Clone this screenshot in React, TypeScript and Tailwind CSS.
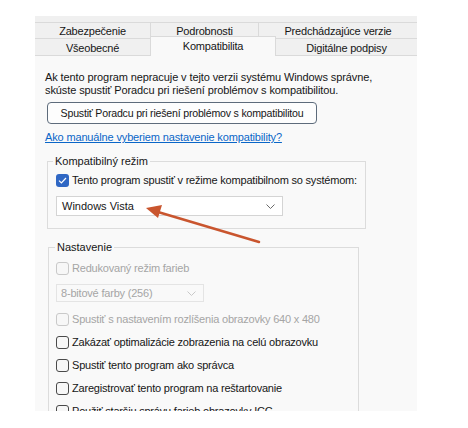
import React from "react";

const font = { fontFamily: '"Liberation Sans", Arial, sans-serif' };

function Chevron({ disabled }: { disabled?: boolean }) {
  return (
    <svg width="9" height="5" viewBox="0 0 9 5" className="shrink-0">
      <path
        d="M0.5 0.5 L4.5 4.5 L8.5 0.5"
        fill="none"
        stroke={disabled ? "#c8c8c8" : "#6a6a6a"}
        strokeWidth="1"
      />
    </svg>
  );
}

function Box({ checked, disabled }: { checked?: boolean; disabled?: boolean }) {
  if (checked) {
    return (
      <span className="flex h-[13px] w-[13px] shrink-0 items-center justify-center rounded-[3px] bg-[#2f67c4]">
        <svg width="9" height="7" viewBox="0 0 9 7">
          <path d="M1 3.6 L3.4 6 L8 1" fill="none" stroke="#ffffff" strokeWidth="1.2" />
        </svg>
      </span>
    );
  }
  return (
    <span
      className={
        disabled
          ? "h-[13px] w-[13px] shrink-0 rounded-[3px] border border-[#c9c9c9] bg-[#f7f7f7]"
          : "h-[13px] w-[13px] shrink-0 rounded-[3px] border border-[#4a4a4a] bg-[#f7f7f7]"
      }
    />
  );
}

function Check({
  label,
  checked,
  disabled,
  tall,
}: {
  label: string;
  checked?: boolean;
  disabled?: boolean;
  tall?: boolean;
}) {
  return (
    <div
      className={
        tall
          ? "flex h-[23px] items-center gap-[3px] whitespace-nowrap tracking-[-0.2px]"
          : "flex h-[22px] items-center gap-[3px] whitespace-nowrap tracking-[-0.2px]"
      }
    >
      <Box checked={checked} disabled={disabled} />
      <span className={disabled ? "text-[#a5a5a5]" : "text-[#161616]"}>{label}</span>
    </div>
  );
}

export default function App() {
  return (
    <div className="relative h-[428px] w-[468px] bg-white text-[11px] leading-[13px]" style={font}>
      <div className="ml-[35px] pt-[16px]">
        <div className="flex h-[395px] w-[382px] flex-col overflow-hidden bg-[#f0f0f0] pt-[6px] text-[#161616]">
          {/* tabs */}
          <div className="flex h-[18px] border-t border-[#dadada] tracking-[-0.2px]">
            <div className="flex w-[116px] items-center justify-center border-r border-[#dadada] pt-[2px]">Zabezpečenie</div>
            <div className="flex w-[108px] items-center justify-center border-r border-[#dadada] pt-[2px]">Podrobnosti</div>
            <div className="flex flex-1 items-center justify-center pt-[2px]">Predchádzajúce verzie</div>
          </div>
          <div className="flex h-[18px] border-t border-b border-[#dadada] tracking-[-0.2px]">
            <div className="flex w-[115px] items-center justify-center pt-[2px]">Všeobecné</div>
            <div className="-mt-[3px] -mb-px flex h-[21px] w-[126px] items-center justify-center border-x border-t border-[#dadada] bg-[#f9f9f9] pb-[2px]">
              Kompatibilita
            </div>
            <div className="flex flex-1 items-center justify-center pt-[2px]">Digitálne podpisy</div>
          </div>

          {/* content */}
          <div className="flex flex-1 flex-col whitespace-nowrap bg-[#f9f9f9] px-[10px] pt-[15px]">
            <p className="tracking-[-0.1px]">
              Ak tento program nepracuje v tejto verzii systému Windows správne,
              <br />
              skúste spustiť Poradcu pri riešení problémov s kompatibilitou.
            </p>
            <button className="ml-[2px] mt-[5px] flex h-[22px] w-[270px] items-center justify-center rounded-[4px] border border-[#5d6b7b] bg-[#fdfdfd] text-[10.6px] tracking-[-0.2px]">
              Spustiť Poradcu pri riešení problémov s kompatibilitou
            </button>
            <a className="mt-[7px] self-start tracking-[-0.15px] text-[#0a66c8] underline">
              Ako manuálne vyberiem nastavenie kompatibility?
            </a>

            <fieldset className="ml-[2px] mt-[11px] h-[74px] w-[313px] border border-[#dcdcdc] px-[8px]">
              <legend className="-ml-[3px] px-[2px]">Kompatibilný režim</legend>
              <div className="mt-[1px]">
                <Check label="Tento program spustiť v režime kompatibilnom so systémom:" checked />
              </div>
              <div className="mt-[5px] flex h-[20px] w-[227px] items-center justify-between border border-[#d4d4d4] bg-white pl-[5px] pr-[7px]">
                <span>Windows Vista</span>
                <Chevron />
              </div>
            </fieldset>

            <fieldset className="ml-[3px] mt-[12px] w-[311px] shrink-0 border border-[#dcdcdc] px-[7px] pb-[20px]">
              <legend className="-ml-[1px] px-[2px]">Nastavenie</legend>
              <div className="mt-[3px]">
                <Check label="Redukovaný režim farieb" disabled />
              </div>
              <div className="mt-[5px] flex h-[18px] w-[148px] items-center justify-between border border-[#e4e4e4] bg-[#f9f9f9] pl-[4px] pr-[7px] text-[#a5a5a5] tracking-[-0.2px]">
                <span>8-bitové farby (256)</span>
                <Chevron disabled />
              </div>
              <div className="mt-[6px] flex flex-col">
                <Check label="Spustiť s nastavením rozlíšenia obrazovky 640 x 480" disabled tall />
                <Check label="Zakázať optimalizácie zobrazenia na celú obrazovku" tall />
                <Check label="Spustiť tento program ako správca" tall />
                <Check label="Zaregistrovať tento program na reštartovanie" tall />
                <Check label="Použiť staršiu správu farieb obrazovky ICC" tall />
              </div>
            </fieldset>
          </div>
        </div>
      </div>

      {/* annotation arrow */}
      <svg className="absolute left-0 top-0" width="468" height="428" viewBox="0 0 468 428">
        <line x1="259" y1="242" x2="158" y2="212" stroke="#c9552e" strokeWidth="2.5" strokeLinecap="round" />
        <polygon points="146,208 162,205 158,218" fill="#c9552e" />
      </svg>
    </div>
  );
}
